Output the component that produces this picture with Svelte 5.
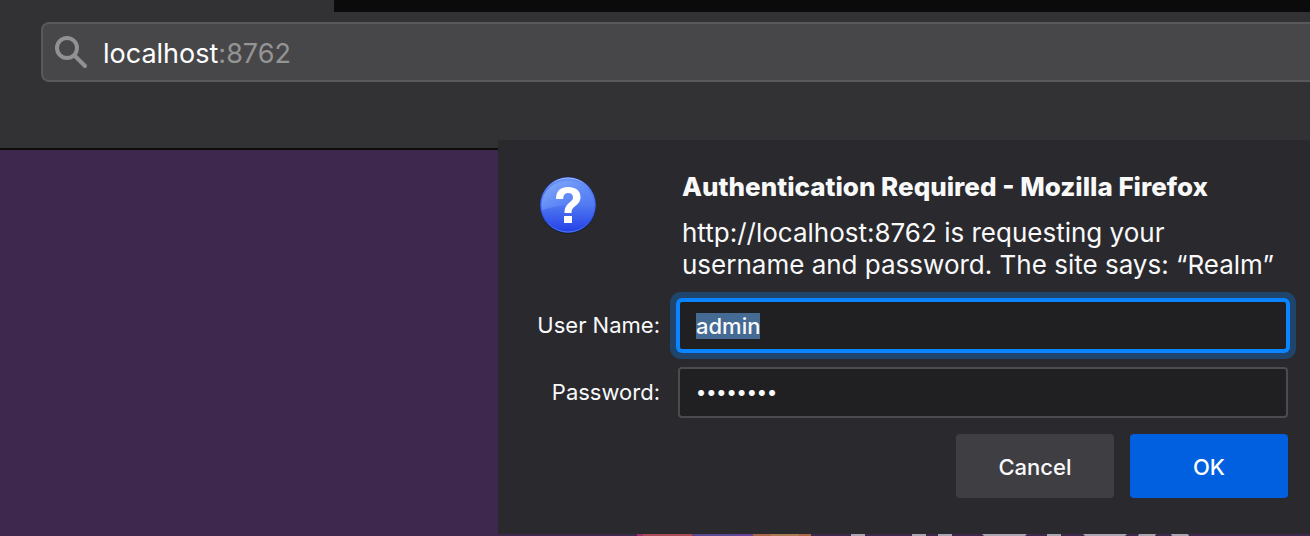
<script>
  import { onMount } from 'svelte';

  let userName = $state('admin');
  let password = $state('password');
  let userField;

  onMount(() => {
    userField.focus();
    userField.select();
  });
</script>

<div class="browser">
  <header class="toolbar">
    <div class="tabs"></div>
    <div class="address" role="search">
      <svg class="search" viewBox="0 0 34 34" aria-hidden="true">
        <circle cx="13" cy="13" r="10" />
        <path d="M20.500 20.500 L31 31" />
      </svg>
      <span class="url">localhost<span class="port">:8762</span></span>
    </div>
  </header>

  <main class="page">
    <svg class="brand" viewBox="0 0 552 2" aria-hidden="true">
      <path fill="#9d2f6c" d="M0 0h7v2H0z" />
      <path fill="#ad4b5a" d="M6 0h49l1 2H6z" />
      <path fill="#5a4a96" d="M55 0h61v2H57z" />
      <path fill="#66409a" d="M98 0h18l-1 2H98z" />
      <path fill="#ab6748" d="M116 0h58v2h-58z" />
      <path fill="#ac7a50" d="M134 0h28v2h-28z" />
      <path
        fill="#aaa5b0"
        d="M214 0h14v2h-14zM275 0h14v2h-14zM301 0h14v2h-14zM345 0h45l-2 2h-41zM410 0h14v2h-14zM446 0h44l-2 2h-40zM502 0h17l-1 2h-17zM534 0h17l1 2h-17z"
      />
    </svg>
  </main>

  <form class="dialog" aria-labelledby="dialog-title" onsubmit={(e) => e.preventDefault()}>
    <svg class="question" viewBox="0 0 60 60" aria-hidden="true">
      <defs>
        <linearGradient id="disc" x1="0" y1="0" x2="0" y2="1">
          <stop offset="0" stop-color="#668ff5" />
          <stop offset="0.5" stop-color="#5079f2" />
          <stop offset="1" stop-color="#2440e6" />
        </linearGradient>
        <linearGradient id="gloss" x1="0" y1="0" x2="1" y2="0.6">
          <stop offset="0" stop-color="#9cc4ff" stop-opacity="0.7" />
          <stop offset="1" stop-color="#5f8cf8" stop-opacity="0.05" />
        </linearGradient>
        <linearGradient id="rim" x1="0" y1="0" x2="0" y2="1">
          <stop offset="0" stop-color="#a9c4ff" />
          <stop offset="0.2" stop-color="#5a82ee" />
          <stop offset="0.8" stop-color="#3358e4" />
          <stop offset="1" stop-color="#4a78f0" />
        </linearGradient>
      </defs>
      <circle cx="30" cy="31" r="28" fill="#1c1d2c" />
      <circle cx="30" cy="30" r="28" fill="#2a45c8" />
      <circle cx="30" cy="30" r="27" fill="url(#disc)" />
      <path d="M3 35.500A27 27 0 0 1 57 30Q28 27 3 35.500z" fill="url(#gloss)" />
      <circle cx="30" cy="30" r="27" fill="none" stroke="url(#rim)" stroke-width="1" />
      <path
        d="M18 24C18 16 22.500 12 30 12C37.500 12 42.500 15.500 42.500 22C42.500 26.500 40 29 37 31.300C34.500 33.300 33.500 34.500 33.500 38H26.500C26.500 32.500 28.500 30 31.500 27.500C34 25.500 35 24.500 35 22.300C35 19.500 33 18 30.200 18C27 18 25.200 20 25.200 24zM26 41H34V48H26z"
        fill="#fff"
      />
    </svg>

    <div class="message">
      <h1 id="dialog-title">Authentication Required - Mozilla Firefox</h1>
      <p>http://localhost:8762 is requesting your username and password. The site says: “Realm”</p>
    </div>

    <label for="user-name">User Name:</label>
    <input id="user-name" type="text" bind:this={userField} bind:value={userName} spellcheck="false" />

    <label for="password">Password:</label>
    <input id="password" type="password" bind:value={password} />

    <div class="actions">
      <button type="button">Cancel</button>
      <button type="submit" class="primary">OK</button>
    </div>
  </form>
</div>

<style>
  :global(body) {
    margin: 0;
    background: #3e284e;
  }

  .browser {
    position: relative;
    display: flex;
    flex-direction: column;
    min-height: 100vh;
    overflow: hidden;
    font-family: Inter, 'Liberation Sans', sans-serif;
    color: #f9f9fa;
  }

  .toolbar {
    box-sizing: border-box;
    height: 150px;
    background: #323234;
    border-bottom: 2px solid #0c0c0d;
  }

  .tabs {
    height: 12px;
    margin-left: 334px;
    background: #0b0b0b;
  }

  .address {
    box-sizing: border-box;
    display: flex;
    align-items: center;
    gap: 15px;
    height: 60px;
    margin: 10px 0 0 41px;
    padding-left: 11px;
    border: 2px solid #59595b;
    border-right: 0;
    border-radius: 8px 0 0 8px;
    background: #474749;
  }

  .search {
    width: 34px;
    height: 34px;
    fill: none;
    stroke: #919192;
    stroke-width: 4;
    stroke-linecap: round;
  }

  .url {
    padding-top: 4px;
    font-size: 27px;
    line-height: 36px;
    color: #fff;
  }

  .port {
    color: #949495;
  }

  .page {
    flex: 1;
    display: flex;
    align-items: flex-end;
    padding-left: 637px;
    background: #3e284e;
  }

  .brand {
    flex: none;
    width: 552px;
    height: 2px;
  }

  .dialog {
    position: absolute;
    inset: 140px 0 2px 498px;
    box-sizing: border-box;
    display: grid;
    grid-template-columns: 122px 1fr;
    grid-template-rows: 144px 51px 51px 64px;
    column-gap: 18px;
    row-gap: 16px;
    align-items: center;
    padding: 0 22px 0 40px;
    background: #2a2a2e;
  }

  .question {
    align-self: start;
    width: 60px;
    height: 60px;
    margin-top: 35px;
  }

  .message {
    align-self: start;
    padding: 31px 0 0 4px;
  }

  h1 {
    margin: 0;
    font-size: 26px;
    line-height: 32px;
    font-weight: 800;
  }

  p {
    margin: 14px 0 0;
    font-size: 26px;
    line-height: 32px;
  }

  label {
    justify-self: end;
    padding-bottom: 2px;
    font-size: 22px;
    line-height: 28px;
    white-space: nowrap;
  }

  input {
    box-sizing: border-box;
    width: 100%;
    height: 51px;
    margin: 0;
    padding: 0 16px;
    border: 2px solid #4c4c4e;
    border-radius: 4px;
    outline: none;
    background: #202022;
    color: #f9f9fa;
    font-family: inherit;
    font-size: 22px;
    font-weight: 500;
    line-height: 27px;
  }

  input[type='password'] {
    font-size: 19px;
  }

  input:focus {
    border-color: #0a84ff;
    box-shadow:
      0 0 0 2px #0a84ff,
      0 0 0 8px #20456d;
  }

  input::selection {
    background: #456a94;
    color: #f9f9fa;
  }

  .actions {
    grid-column: 1 / -1;
    display: flex;
    justify-content: flex-end;
    gap: 16px;
  }

  button {
    width: 158px;
    height: 64px;
    padding: 2px 0 0;
    border: 0;
    border-radius: 4px;
    background: #3f3e43;
    color: #f9f9fa;
    font-family: inherit;
    font-size: 22px;
    font-weight: 500;
    line-height: 28px;
  }

  .primary {
    background: #0060df;
    color: #fff;
  }
</style>
